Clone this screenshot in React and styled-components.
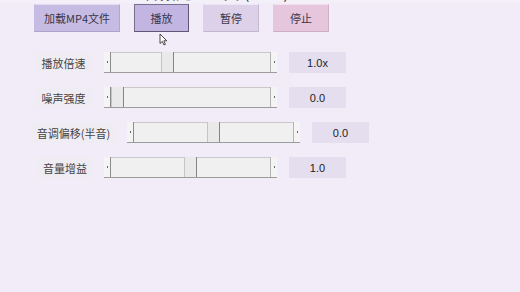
import React from 'react'
import styled, { createGlobalStyle } from 'styled-components'

const GlobalStyle = createGlobalStyle`
  html, body {
    margin: 0;
    padding: 0;
    background: #f1ecf8;
  }
  body {
    font-family: "Noto Sans CJK SC", "Liberation Sans", sans-serif;
    color: #333;
  }
`

const sliders = [
  { label: '播放倍速', indent: 35, labelWidth: 57, value: '1.0x', pos: 0.34 },
  { label: '噪声强度', indent: 35, labelWidth: 57, value: '0.0', pos: 0 },
  { label: '音调偏移(半音)', indent: 32, labelWidth: 83, value: '0.0', pos: 0.5 },
  { label: '音量增益', indent: 38, labelWidth: 54, value: '1.0', pos: 0.5 },
]

function Slider({ pos }) {
  return (
    <SliderFrame>
      <Arrow side="left"><Dot /></Arrow>
      <Trough>
        <Thumb style={{ left: `calc(${pos} * (100% - 13px))` }} />
      </Trough>
      <Arrow side="right"><Dot /></Arrow>
    </SliderFrame>
  )
}

export default function App() {
  return (
    <Page>
      <GlobalStyle />
      <TitleStrip>
        <span>音频处理工具 (MP4)</span>
      </TitleStrip>
      <ButtonBar>
        <Button bg="#c6bbe3" width={86}>加载MP4文件</Button>
        <Button bg="#c2b5e2" width={55} active>播放</Button>
        <Button bg="#dcd1e8" width={56}>暂停</Button>
        <Button bg="#e6c6dd" width={56}>停止</Button>
        <Cursor width="9" height="13" viewBox="0 0 9 13">
          <path d="M1 1 L1 10.5 L3.3 8.4 L5 12 L6.4 11.3 L4.8 7.8 L7.8 7.8 Z" fill="#fff" stroke="#333" strokeWidth="0.9" strokeLinejoin="round" />
        </Cursor>
      </ButtonBar>
      <Rows>
        {sliders.map(s => (
          <Row key={s.label} indent={s.indent}>
            <Label width={s.labelWidth}>{s.label}</Label>
            <Slider pos={s.pos} />
            <ValueBox>{s.value}</ValueBox>
          </Row>
        ))}
      </Rows>
    </Page>
  )
}

const Page = styled.div`
  width: 520px;
  height: 292px;
  background: #f1ecf8;
  overflow: hidden;
`

const TitleStrip = styled.div`
  height: 3px;
  overflow: hidden;
  display: flex;
  align-items: flex-end;
  padding-left: 144px;
  background: #f4f0fa;
  margin-bottom: 1px;

  span {
    font-size: 15px;
    line-height: 20px;
    height: 20px;
    flex-shrink: 0;
    color: #333;
    letter-spacing: 1px;
  }
`

const ButtonBar = styled.div`
  position: relative;
  display: flex;
  gap: 14px;
  padding-left: 34px;
  height: 28px;
`

const Button = styled.div`
  width: ${p => p.width}px;
  height: 28px;
  box-sizing: border-box;
  background: ${p => p.bg};
  display: flex;
  align-items: center;
  justify-content: center;
  font-size: 11px;
  color: #3a3548;
  border: 1px solid ${p => (p.active ? '#77708c' : 'transparent')};
  border-bottom-color: ${p => (p.active ? '#5f5875' : 'rgba(0,0,0,0.12)')};
  border-right-color: ${p => (p.active ? '#5f5875' : 'rgba(0,0,0,0.1)')};
  border-top-color: ${p => (p.active ? '#77708c' : 'rgba(255,255,255,0.5)')};
`

const Cursor = styled.svg`
  position: absolute;
  left: 159px;
  top: 29px;
`

const Rows = styled.div`
  display: flex;
  flex-direction: column;
  gap: 14px;
  margin-top: 20px;
`

const Row = styled.div`
  display: flex;
  align-items: center;
  gap: 12px;
  padding-left: ${p => p.indent}px;
  height: 21px;
`

const Label = styled.div`
  width: ${p => p.width}px;
  height: 21px;
  background: #efecf3;
  display: flex;
  align-items: center;
  justify-content: center;
  font-size: 11px;
  color: #444;
  white-space: nowrap;
`

const SliderFrame = styled.div`
  width: 173px;
  height: 21px;
  box-sizing: border-box;
  display: flex;
  border-bottom: 1px solid #9c9c9c;
  background: #f3f3f3;
`

const Arrow = styled.div`
  width: 6px;
  display: flex;
  align-items: center;
  justify-content: center;
  background: #f4f4f4;
  ${p => (p.side === 'left' ? 'border-right: 1px solid #8c8c8c;' : 'border-left: 1px solid #b4b4b4;')}
`

const Dot = styled.div`
  width: 1px;
  height: 2px;
  background: #666;
`

const Trough = styled.div`
  position: relative;
  flex: 1;
  background: #f0f0f0;
  border-top: 1px solid #c9c9c9;
`

const Thumb = styled.div`
  position: absolute;
  top: -1px;
  bottom: 0;
  width: 13px;
  box-sizing: border-box;
  background: #e9e9e9;
  border-left: 1px solid #c4c4c4;
  border-right: 1px solid #858585;
`

const ValueBox = styled.div`
  width: 57px;
  height: 21px;
  background: #e4deef;
  display: flex;
  align-items: center;
  justify-content: center;
  font-family: "Liberation Sans", Arial, sans-serif;
  font-size: 11px;
  color: #222;
`
